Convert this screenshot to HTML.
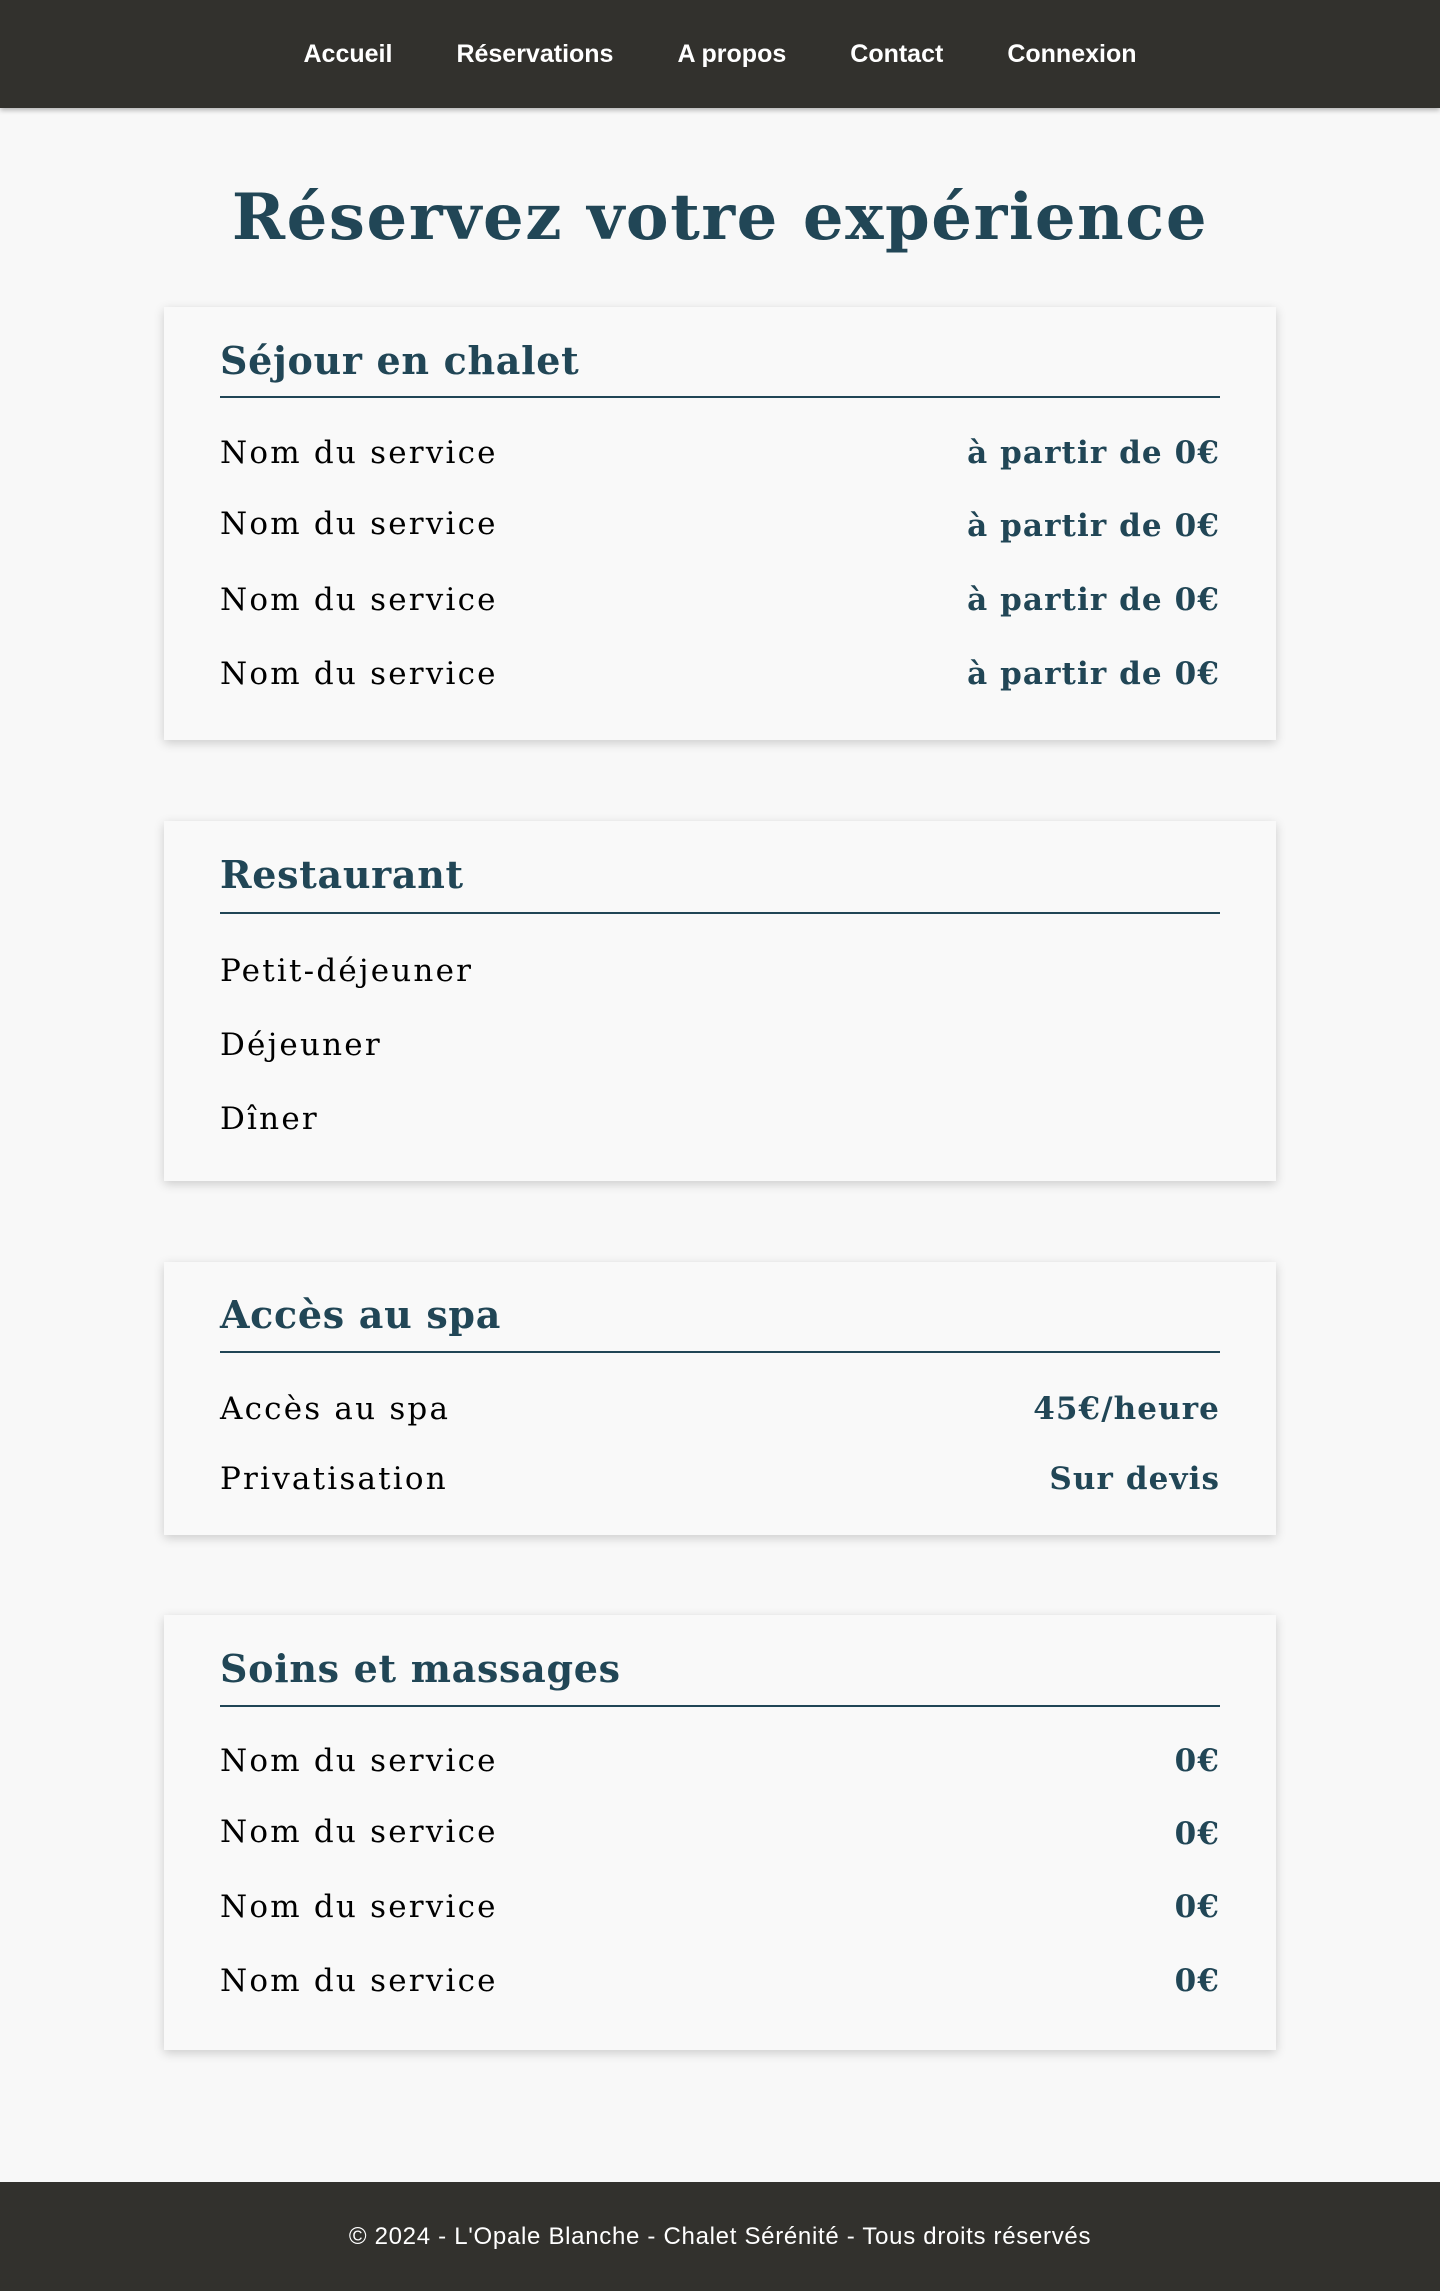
<!DOCTYPE html>
<html><head><meta charset="utf-8">
<style>
*{margin:0;padding:0;box-sizing:border-box}
body{width:1440px;height:2291px;background:#f8f8f8;position:relative;overflow:hidden;font-family:"DejaVu Serif","Liberation Serif",serif}
nav{position:absolute;left:0;top:0;width:1440px;height:108px;background:#32312d;box-shadow:0 2px 5px rgba(0,0,0,.3);display:flex;justify-content:center;align-items:center;gap:64px;font-family:"Liberation Sans",sans-serif;font-weight:bold;font-size:25px;color:#fff;z-index:2}
h1{position:absolute;left:0;width:1440px;top:186px;text-align:center;font-size:64px;line-height:1;color:#214656;font-weight:bold;letter-spacing:1.6px}
.card{position:absolute;left:164px;width:1112px;background:#f9f9f9;box-shadow:0 3px 10px rgba(0,0,0,.18)}
.t{position:absolute;line-height:1;white-space:nowrap}
.h{left:56px;font-size:38px;font-weight:bold;color:#214656;letter-spacing:.7px}
.line{position:absolute;left:56px;width:1000px;height:2px;background:#214656}
.l{left:56px;font-size:31px;color:#000;letter-spacing:2.2px}
.r{right:56px;font-size:31px;font-weight:bold;color:#214656;letter-spacing:1.1px}
footer{position:absolute;left:0;top:2182px;width:1440px;height:109px;background:#32312d;color:#fff;font-family:"Liberation Sans",sans-serif;font-size:24px;letter-spacing:.7px;display:flex;justify-content:center;align-items:center}
</style></head><body>
<nav><span>Accueil</span><span>Réservations</span><span>A propos</span><span>Contact</span><span>Connexion</span></nav>
<h1>Réservez votre expérience</h1>

<div class="card" style="top:307px;height:433px">
<div class="t h" style="top:35px">Séjour en chalet</div>
<div class="line" style="top:89px"></div>
<div class="t l" style="top:131px">Nom du service</div><div class="t r" style="top:131px">à partir de 0€</div>
<div class="t l" style="top:202px">Nom du service</div><div class="t r" style="top:204px">à partir de 0€</div>
<div class="t l" style="top:278px">Nom du service</div><div class="t r" style="top:278px">à partir de 0€</div>
<div class="t l" style="top:352px">Nom du service</div><div class="t r" style="top:352px">à partir de 0€</div>
</div>

<div class="card" style="top:821px;height:360px">
<div class="t h" style="top:35px">Restaurant</div>
<div class="line" style="top:91px"></div>
<div class="t l" style="top:135px">Petit-déjeuner</div>
<div class="t l" style="top:209px">Déjeuner</div>
<div class="t l" style="top:283px">Dîner</div>
</div>

<div class="card" style="top:1262px;height:273px">
<div class="t h" style="top:34px">Accès au spa</div>
<div class="line" style="top:89px"></div>
<div class="t l" style="top:132px">Accès au spa</div><div class="t r" style="top:132px">45€/heure</div>
<div class="t l" style="top:202px">Privatisation</div><div class="t r" style="top:202px">Sur devis</div>
</div>

<div class="card" style="top:1615px;height:435px">
<div class="t h" style="top:35px">Soins et massages</div>
<div class="line" style="top:90px"></div>
<div class="t l" style="top:131px">Nom du service</div><div class="t r" style="top:131px">0€</div>
<div class="t l" style="top:202px">Nom du service</div><div class="t r" style="top:204px">0€</div>
<div class="t l" style="top:277px">Nom du service</div><div class="t r" style="top:277px">0€</div>
<div class="t l" style="top:351px">Nom du service</div><div class="t r" style="top:351px">0€</div>
</div>

<footer>© 2024 - L'Opale Blanche - Chalet Sérénité - Tous droits réservés</footer>
</body></html>
